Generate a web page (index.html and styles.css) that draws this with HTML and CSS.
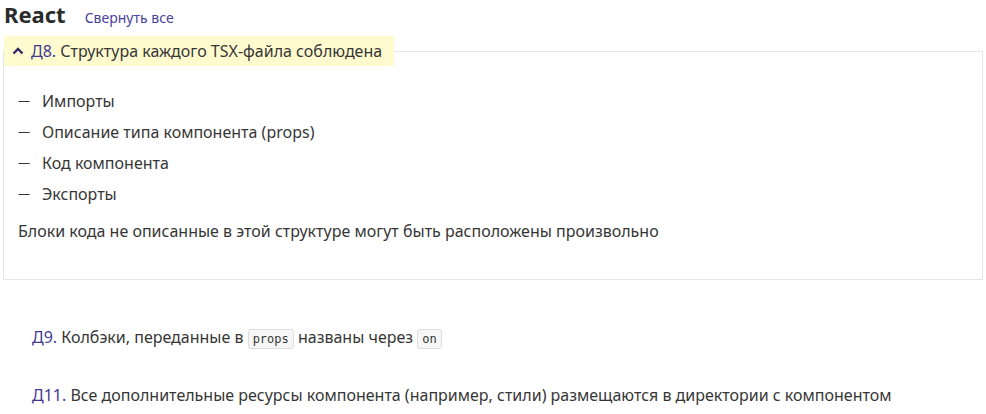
FILE: index.html
```html
<!DOCTYPE html>
<html lang="ru">
<head>
<meta charset="utf-8">
<link rel="stylesheet" href="styles.css">
</head>
<body>
<div class="page">
  <div class="header">
    <h2 class="title">React</h2>
    <a class="collapse-all">Свернуть все</a>
  </div>
  <fieldset class="rule open">
    <legend class="rule-legend">
      <svg class="chev" width="12" height="8" viewBox="0 0 12 8"><path d="M1.5 6.5 L6 2 L10.5 6.5" fill="none" stroke="#2e2a6b" stroke-width="2.4"/></svg>
      <span><span class="code-id">Д8.</span> Структура каждого TSX-файла соблюдена</span>
    </legend>
    <div class="rule-body">
      <ul class="dash-list">
        <li>Импорты</li>
        <li>Описание типа компонента (props)</li>
        <li>Код компонента</li>
        <li>Экспорты</li>
      </ul>
      <p class="note">Блоки кода не описанные в этой структуре могут быть расположены произвольно</p>
    </div>
  </fieldset>
  <div class="rule-closed"><span class="code-id">Д9.</span> Колбэки, переданные в <code>props</code> названы через <code>on</code></div>
  <div class="rule-closed"><span class="code-id">Д11.</span> Все дополнительные ресурсы компонента (например, стили) размещаются в директории с компонентом</div>
</div>
</body>
</html>
```
FILE: styles.css
```css
* { box-sizing: border-box; }
body {
  margin: 0;
  background: #fff;
  font-family: "Noto Sans", sans-serif;
  color: #363636;
}
.page { padding: 0 4px 0 4px; }
.header {
  display: flex;
  align-items: baseline;
  gap: 19px;
  height: 36px;
}
.title {
  margin: 0;
  font-size: 22px;
  font-weight: 700;
  color: #2b2b2b;
  line-height: 28px;
}
.collapse-all {
  font-size: 14px;
  color: #4a3f9e;
}
.rule {
  margin: 0 0 0 -1px;
  width: 980px;
  padding: 0;
  border: 1px solid #e6e6e6;
  height: 244px;
}
.rule-legend {
  padding: 0 12px 0 8px;
  margin: 0;
  background: #fffbcf;
  height: 30px;
  line-height: 30px;
  font-size: 16px;
  color: #363636;
  display: flex;
  align-items: center;
}
.chev { margin-right: 7px; }
.code-id { color: #3f3a92; }
.rule-body { padding: 20px 14px 0 14px; }
.dash-list {
  list-style: none;
  margin: 0;
  padding: 0;
}
.dash-list li {
  font-size: 16px;
  line-height: 31px;
  padding-left: 24px;
  position: relative;
}
.dash-list li::before {
  content: "—";
  font-size: 12px;
  position: absolute;
  left: 0;
  top: -1px;
}
.note {
  margin: 9px 0 0;
  font-size: 16px;
  line-height: 24px;
}
.rule-closed {
  font-size: 16px;
  padding-left: 28px;
  line-height: 24px;
}
.rule + .rule-closed { margin-top: 45px; }
.rule-closed + .rule-closed { margin-top: 32px; }
code {
  font-family: "DejaVu Sans Mono", monospace;
  font-size: 12px;
  background: #f6f6f6;
  border: 1px solid #dedede;
  border-radius: 3px;
  padding: 2px 4px;
}
```
